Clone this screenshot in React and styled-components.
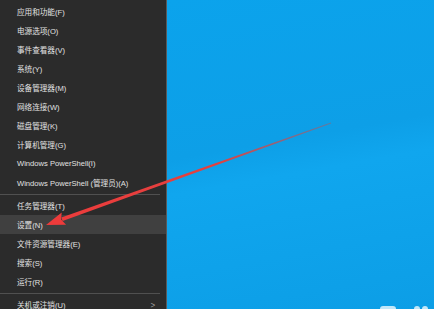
import React from 'react'
import styled, { createGlobalStyle } from 'styled-components'

const GlobalStyle = createGlobalStyle`
  html, body {
    margin: 0;
    padding: 0;
    width: 434px;
    height: 309px;
    overflow: hidden;
  }
  body {
    font-family: "Liberation Sans", "Noto Sans CJK SC", sans-serif;
  }
`

const Screen = styled.div`
  position: relative;
  width: 434px;
  height: 309px;
  display: flex;
  overflow: hidden;
`

const Menu = styled.div`
  width: 166px;
  flex-shrink: 0;
  background: #2b2b2b;
  border-right: 1px solid #595959;
  padding-top: 2px;
  display: flex;
  flex-direction: column;
`

const Item = styled.div`
  height: 19px;
  flex-shrink: 0;
  display: flex;
  align-items: center;
  justify-content: space-between;
  padding: 0 9px 0 17px;
  font-size: 7.6px;
  color: #e2e2e2;
  background: ${p => (p.$active ? '#404040' : 'transparent')};
  white-space: nowrap;
`

const Separator = styled.div`
  height: 4px;
  flex-shrink: 0;
  display: flex;
  align-items: center;
  &::after {
    content: '';
    display: block;
    width: 160px;
    height: 1px;
    background: #505050;
  }
`

const Chevron = styled.span`
  font-family: "DejaVu Sans", sans-serif;
  font-size: 9px;
  color: #9a9a9a;
  transform: scaleX(0.7);
`

const Desktop = styled.div`
  flex: 1;
  position: relative;
  background: linear-gradient(170deg, #0ba3ec 0%, #0d9fe7 45%, #10a6ee 55%, #0c9ee6 100%);
`

const DesktopIcon = styled.div`
  position: absolute;
  bottom: -3px;
  right: ${p => p.$right}px;
  width: ${p => p.$w}px;
  height: 6px;
  border-radius: 3px 3px 0 0;
  background: rgba(255, 255, 255, 0.75);
`

const Overlay = styled.svg`
  position: absolute;
  left: 0;
  top: 0;
  pointer-events: none;
`

const groups = [
  ['应用和功能(F)', '电源选项(O)', '事件查看器(V)', '系统(Y)', '设备管理器(M)', '网络连接(W)', '磁盘管理(K)', '计算机管理(G)', 'Windows PowerShell(I)', 'Windows PowerShell (管理员)(A)'],
  ['任务管理器(T)', '设置(N)', '文件资源管理器(E)', '搜索(S)', '运行(R)'],
]

function Arrow() {
  // tip at lower left, tail fades towards the upper right
  const tip = [46, 225]
  const tail = [331, 123]
  const dx = tail[0] - tip[0]
  const dy = tail[1] - tip[1]
  const len = Math.hypot(dx, dy)
  const ux = dx / len
  const uy = dy / len
  const px = -uy
  const py = ux
  const headLen = 19
  const headW = 6.5
  const bx = tip[0] + ux * headLen
  const by = tip[1] + uy * headLen
  const s0 = 1.9
  const s1 = 0.5
  const shaft = [
    [bx - ux * 2 + px * s0, by - uy * 2 + py * s0],
    [tail[0] + px * s1, tail[1] + py * s1],
    [tail[0] - px * s1, tail[1] - py * s1],
    [bx - ux * 2 - px * s0, by - uy * 2 - py * s0],
  ]
  const head = [
    tip,
    [bx + px * headW, by + py * headW],
    [bx - ux * 3, by - uy * 3],
    [bx - px * headW, by - py * headW],
  ]
  const pts = a => a.map(p => p.join(',')).join(' ')
  return (
    <Overlay width="434" height="309" viewBox="0 0 434 309">
      <defs>
        <linearGradient id="fade" x1={tip[0]} y1={tip[1]} x2={tail[0]} y2={tail[1]} gradientUnits="userSpaceOnUse">
          <stop offset="0" stopColor="#ee3b3b" />
          <stop offset="0.6" stopColor="#e2413f" />
          <stop offset="1" stopColor="#b0565e" stopOpacity="0.5" />
        </linearGradient>
      </defs>
      <polygon points={pts(shaft)} fill="url(#fade)" />
      <polygon points={pts(head)} fill="#ee3b3b" />
    </Overlay>
  )
}

export default function App() {
  return (
    <Screen>
      <GlobalStyle />
      <Menu>
        {groups[0].map(t => <Item key={t}>{t}</Item>)}
        <Separator />
        {groups[1].map(t => <Item key={t} $active={t === '设置(N)'}>{t}</Item>)}
        <Separator />
        <Item>
          关机或注销(U)
          <Chevron>&gt;</Chevron>
        </Item>
      </Menu>
      <Desktop>
        <DesktopIcon $right={6} $w={6} />
        <DesktopIcon $right={14} $w={6} />
        <DesktopIcon $right={38} $w={16} />
      </Desktop>
      <Arrow />
    </Screen>
  )
}
